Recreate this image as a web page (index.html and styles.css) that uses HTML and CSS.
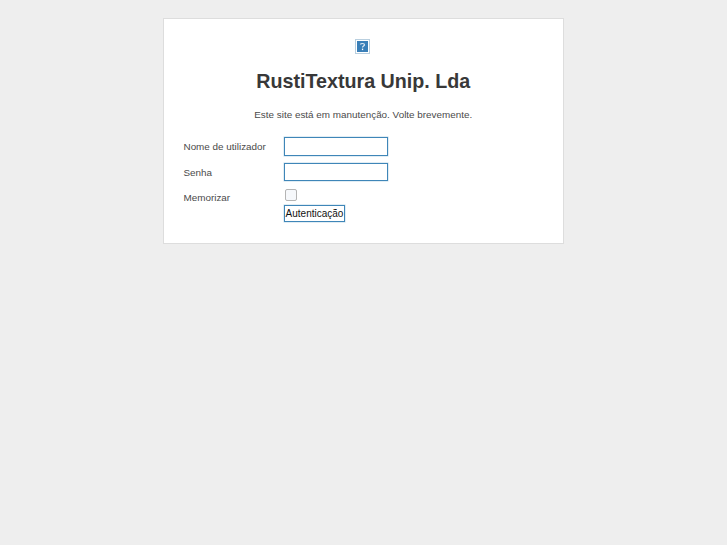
FILE: index.html
```html
<!DOCTYPE html>
<html lang="pt">
<head>
<meta charset="utf-8">
<title>RustiTextura Unip. Lda</title>
<link rel="stylesheet" href="styles.css">
</head>
<body>
<main class="card">
  <div class="logo">
    <svg width="15" height="15" viewBox="0 0 15 15" aria-hidden="true">
      <rect x="0.5" y="0.5" width="14" height="14" fill="#fff" stroke="#b9cfdf"/>
      <rect x="2" y="2" width="11" height="11" fill="#3a7fb8"/>
      <path d="M5.5 5.6C5.5 4.2 9.5 4 9.5 5.8C9.5 7.2 7.5 7 7.5 8.6" fill="none" stroke="#dfeaf3" stroke-width="1.2"/>
      <rect x="6.9" y="9.6" width="1.3" height="1.5" fill="#fff"/>
    </svg>
  </div>
  <h1 class="title">RustiTextura Unip. Lda</h1>
  <p class="message">Este site está em manutenção. Volte brevemente.</p>
  <form class="form">
    <label class="label" for="u">Nome de utilizador</label>
    <input class="field" id="u" type="text">
    <label class="label" for="p">Senha</label>
    <input class="field" id="p" type="password">
    <label class="label label-check" for="m">Memorizar</label>
    <div class="check-col">
      <span class="check" id="m"></span>
      <button class="submit" type="button">Autenticação</button>
    </div>
  </form>
</main>
</body>
</html>
```
FILE: styles.css
```css
html, body { margin: 0; padding: 0; }
body {
  background: #eeeeee;
  font-family: "Liberation Sans", Arial, sans-serif;
  font-size: 9.9px;
  color: #4a4a4a;
  min-height: 545px;
}
.card {
  box-sizing: border-box;
  width: 401.5px;
  height: 226px;
  margin: 18px 0 0 162.5px;
  background: #ffffff;
  border: 1.5px solid #dddddd;
  padding: 20px 20px 0;
}
.logo { height: 15px; display: flex; justify-content: center; padding-right: 2px; }
.title {
  margin: 14px 0 0;
  font-size: 19.7px;
  line-height: 26px;
  font-weight: bold;
  text-align: center;
  color: #383838;
}
.message {
  margin: 14px 0 0;
  line-height: 14px;
  text-align: center;
}
.form {
  display: grid;
  grid-template-columns: 100.5px 1fr;
  row-gap: 6.5px;
  margin-top: 15px;
  align-items: center;
}
.label { line-height: 19px; }
.label-check { align-self: start; }
.field {
  box-sizing: border-box;
  width: 104px;
  height: 18.5px;
  margin: 0;
  padding: 0 2px;
  background: #fff;
  border: 1px solid #3f86b8;
  box-shadow: 0 0 0 0.5px #c4dbea;
  outline: 0;
}
.check-col { display: flex; flex-direction: column; align-items: flex-start; }
.check {
  box-sizing: border-box;
  display: block;
  width: 12px;
  height: 12px;
  margin: 1px 0 4px 1px;
  background: #f6f8fb;
  border: 1px solid #b4b4b4;
  border-radius: 2px;
}
.submit {
  box-sizing: border-box;
  height: 17px;
  width: 61px;
  margin: 0;
  padding: 0;
  background: #fff;
  border: 1px solid #3f86b8;
  box-shadow: 0 0 0 0.5px #c4dbea;
  font: 10px "Liberation Sans", Arial, sans-serif;
  color: #111111;
  white-space: nowrap;
}
```
